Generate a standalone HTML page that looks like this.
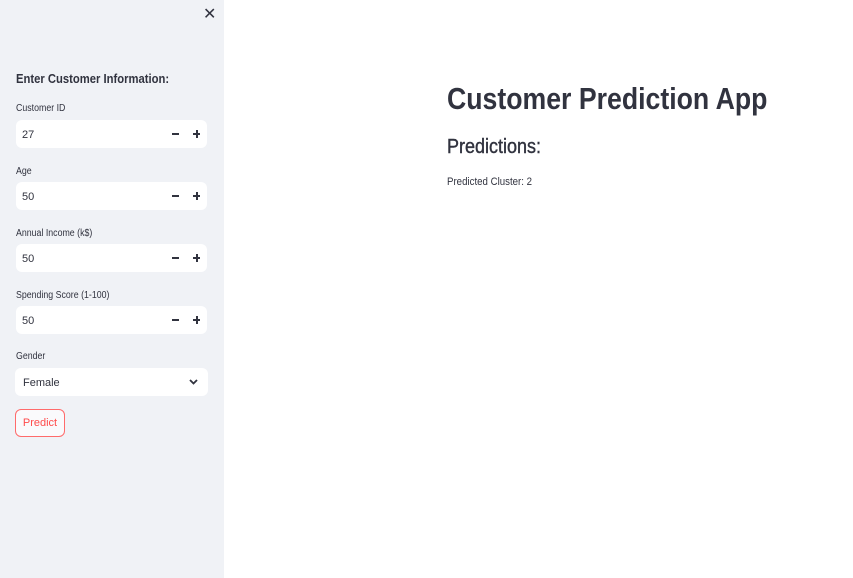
<!DOCTYPE html>
<html><head><style>
*{margin:0;padding:0;box-sizing:border-box}
body{width:853px;height:578px;position:relative;background:#fff;font-family:"Liberation Sans",sans-serif;color:#31333f;overflow:hidden}
.sb{position:absolute;left:0;top:0;width:224px;height:578px;background:#f0f2f6}
.t{position:absolute;white-space:nowrap;transform-origin:left center}
.lbl{font-size:10px;color:#31333f;transform:scaleX(.88)}
.inp{position:absolute;left:16px;width:191px;height:28px;background:#fff;border-radius:6px}
.inp span.v{position:absolute;left:6px;top:9px;font-size:11px}
.inp .m{position:absolute;left:156px;top:13px;width:7px;height:2px;background:#31333f}
.inp .p1{position:absolute;left:177px;top:13px;width:7px;height:2px;background:#31333f}
.inp .p2{position:absolute;left:180px;top:10px;width:2px;height:8px;background:#31333f}
</style></head><body>
<div class="sb">
<div class="t" style="left:203px;top:4px;font-size:16px;color:#31333f">✕</div>
<div class="t" style="left:16px;top:72px;font-size:12.5px;font-weight:bold;transform:scaleX(.9)">Enter Customer Information:</div>
<div class="t lbl" style="left:16px;top:103px">Customer ID</div>
<div class="inp" style="top:120px"><span class="v">27</span><i class="m"></i><i class="p1"></i><i class="p2"></i></div>
<div class="t lbl" style="left:16px;top:166px">Age</div>
<div class="inp" style="top:182px"><span class="v">50</span><i class="m"></i><i class="p1"></i><i class="p2"></i></div>
<div class="t lbl" style="left:16px;top:228px">Annual Income (k$)</div>
<div class="inp" style="top:244px"><span class="v">50</span><i class="m"></i><i class="p1"></i><i class="p2"></i></div>
<div class="t lbl" style="left:16px;top:290px">Spending Score (1-100)</div>
<div class="inp" style="top:306px"><span class="v">50</span><i class="m"></i><i class="p1"></i><i class="p2"></i></div>
<div class="t lbl" style="left:16px;top:351px">Gender</div>
<div class="inp" style="top:368px;left:15px;width:193px"><span class="v" style="left:8px;top:9px">Female</span>
<svg style="position:absolute;left:174px;top:11px" width="9" height="6" viewBox="0 0 9 6"><path d="M1 1l3.5 3.5L8 1" stroke="#31333f" stroke-width="1.8" fill="none"/></svg></div>
<div style="position:absolute;left:15px;top:409px;width:50px;height:28px;border:1px solid #ff6b6b;border-radius:6px;background:#fafafc;color:#ff4b4b;font-size:11px;text-align:center;line-height:27px">Predict</div>
</div>
<div class="t" style="left:447px;top:81px;font-size:31px;font-weight:bold;transform:scaleX(.86)">Customer Prediction App</div>
<div class="t" style="left:447px;top:136px;font-size:20px;transform:scaleX(.9);-webkit-text-stroke:0.4px #31333f">Predictions:</div>
<div class="t" style="left:447px;top:176px;font-size:11px;transform:scaleX(.88)">Predicted Cluster: 2</div>
</body></html>
